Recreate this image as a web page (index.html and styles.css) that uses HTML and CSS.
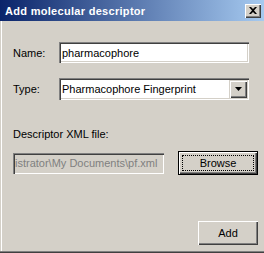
FILE: index.html
```html
<!DOCTYPE html>
<html lang="en">

<head>
    <meta charset="UTF-8">
    <title>Add molecular descriptor</title>
    <link rel="stylesheet" href="styles.css">
</head>

<body>
    <div class="dialog">
        <div class="dialog-title">
            <span class="dialog-caption">Add molecular descriptor</span>
            <span class="title-close">
                <svg width="8" height="7" viewBox="0 0 8 7">
                    <path d="M0 0h2l2 2 2-2h2L5 3.5 8 7H6L4 5 2 7H0l3-3.5z" fill="#000"/>
                </svg>
            </span>
        </div>
        <div class="dialog-body">
            <div class="form-row row-name">
                <label class="form-label">Name:</label>
                <div class="field">pharmacophore</div>
            </div>
            <div class="form-row row-type">
                <label class="form-label">Type:</label>
                <div class="field combo">
                    <span class="combo-text">Pharmacophore Fingerprint</span>
                    <span class="combo-btn">
                        <svg width="7" height="4" viewBox="0 0 7 4"><path d="M0 0h7L3.5 4z" fill="#000"/></svg>
                    </span>
                </div>
            </div>
            <div class="file-label">Descriptor XML file:</div>
            <div class="file-row">
                <div class="field field-disabled">istrator\My Documents\pf.xml</div>
                <div class="btn btn-default"><span class="btn-focus">Browse</span></div>
            </div>
            <div class="dialog-footer">
                <div class="btn btn-add">Add</div>
            </div>
        </div>
    </div>
</body>

</html>
```

FILE: styles.css
```css
* {
    margin: 0;
    padding: 0;
    box-sizing: border-box;
}

body {
    font-family: "Liberation Sans", Arial, sans-serif;
    font-size: 11px;
    color: #000;
    background: #d4d0c8;
}

.dialog {
    width: 264px;
    height: 253px;
    display: flex;
    flex-direction: column;
    background: #d4d0c8;
}

.dialog-title {
    height: 21px;
    display: flex;
    align-items: center;
    justify-content: space-between;
    padding: 0 3px 0 5px;
    background: linear-gradient(to right, #0a246a, #a6caf0);
}

.dialog-caption {
    color: #fff;
    font-weight: bold;
    font-size: 11px;
    letter-spacing: 0.3px;
}

.title-close {
    width: 16px;
    height: 14px;
    display: flex;
    align-items: center;
    justify-content: center;
    background: #d4d0c8;
    box-shadow: inset 1px 1px #fff, inset -1px -1px #404040, inset -2px -2px #808080;
}

.dialog-body {
    flex: 1;
    padding: 21px 6px 0 13px;
    background: linear-gradient(to right, #d4d0c8 1px, #fff 1px, #fff 2px, #d4d0c8 2px);
    box-shadow: inset 0 -1px #404040, inset 0 -2px #808080;
}

.form-row {
    display: flex;
    align-items: center;
}

.form-label {
    width: 46px;
}

.field {
    height: 21px;
    display: flex;
    align-items: center;
    padding: 0 3px;
    background: #fff;
    box-shadow: inset 1px 1px #808080, inset 2px 2px #404040, inset -1px -1px #fff, inset -2px -2px #d4d0c8;
    white-space: nowrap;
    overflow: hidden;
}

.row-name .field {
    width: 190px;
}

.row-type {
    margin-top: 15px;
}

.combo {
    width: 190px;
    height: 22px;
    padding: 2px 2px 2px 3px;
    justify-content: space-between;
}

.combo-btn {
    width: 18px;
    height: 18px;
    display: flex;
    align-items: center;
    justify-content: center;
    background: #d4d0c8;
    box-shadow: inset 1px 1px #d4d0c8, inset 2px 2px #fff, inset -1px -1px #404040, inset -2px -2px #808080;
}

.file-label {
    margin-top: 28px;
    line-height: 13px;
}

.file-row {
    margin-top: 10px;
    display: flex;
    align-items: center;
    justify-content: space-between;
}

.field-disabled {
    width: 151px;
    color: #808080;
    background: #d4d0c8;
    padding-left: 2px;
}

.btn {
    height: 24px;
    display: flex;
    align-items: center;
    justify-content: center;
    background: #d4d0c8;
    box-shadow: inset 1px 1px #fff, inset -1px -1px #404040, inset -2px -2px #808080;
}

.btn-default {
    width: 80px;
    border: 1px solid #000;
    padding: 3px;
}

.btn-focus {
    width: 100%;
    height: 100%;
    display: flex;
    align-items: center;
    justify-content: center;
    border: 1px dotted #000;
}

.dialog-footer {
    margin-top: 46px;
    display: flex;
    justify-content: flex-end;
}

.btn-add {
    width: 60px;
}
```
